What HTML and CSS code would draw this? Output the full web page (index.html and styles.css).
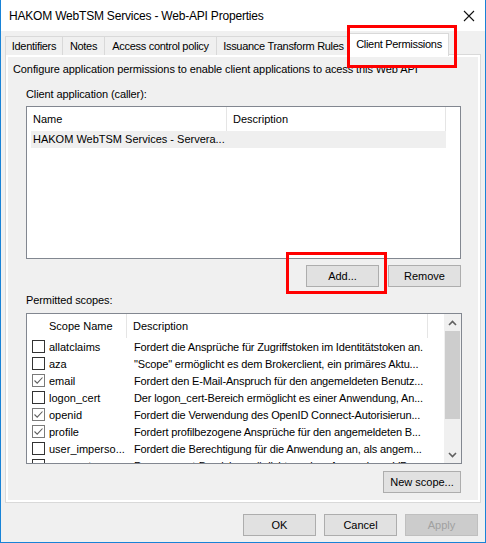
FILE: index.html
```html
<!DOCTYPE html>
<html lang="en">
<head>
  <meta charset="UTF-8">
  <title>HAKOM WebTSM Services - Web-API Properties</title>
  <link rel="stylesheet" href="styles.css">
</head>
<body>

  <div class="window">
    <div class="titlebar">
      <span class="title">HAKOM WebTSM Services - Web-API Properties</span>
      <svg class="close" width="12" height="12" viewBox="0 0 12 12">
        <path d="M1 1L11 11M11 1L1 11" stroke="#111" stroke-width="1.1" fill="none"/>
      </svg>
    </div>

    <div class="body">
      <div class="tabs">
        <div class="tab w-ident">Identifiers</div>
        <div class="tab w-notes">Notes</div>
        <div class="tab w-access">Access control policy</div>
        <div class="tab w-issue">Issuance Transform Rules</div>
        <div class="tab selected">Client Permissions</div>
      </div>

      <div class="panel">
        <div class="page">
          <div class="intro">Configure application permissions to enable client applications to acess this Web API</div>

          <div class="label">Client application (caller):</div>
          <div class="listview clients">
            <div class="header">
              <div class="col c-name">Name</div>
              <div class="col c-desc">Description</div>
            </div>
            <div class="row picked">
              <div class="col c-name">HAKOM WebTSM Services - Servera...</div>
            </div>
          </div>

          <div class="btn-row">
            <button class="btn">Add...</button>
            <button class="btn">Remove</button>
          </div>

          <div class="label second">Permitted scopes:</div>
          <div class="listview scopes">
            <div class="scroll-area">
              <div class="header">
                <div class="col s-name">Scope Name</div>
                <div class="col s-desc">Description</div>
              </div>
              <div class="srow"><span class="check"></span><span class="s-name">allatclaims</span><span class="s-desc">Fordert die Ansprüche für Zugriffstoken im Identitätstoken an.</span></div>
              <div class="srow"><span class="check"></span><span class="s-name">aza</span><span class="s-desc">"Scope" ermöglicht es dem Brokerclient, ein primäres Aktu...</span></div>
              <div class="srow"><span class="check on"><svg width="11" height="11" viewBox="0 0 11 11"><path d="M1.5 5.5L4.2 8.2L9.5 2.5" stroke="#5f5f5f" stroke-width="1.1" fill="none"/></svg></span><span class="s-name">email</span><span class="s-desc">Fordert den E-Mail-Anspruch für den angemeldeten Benutz...</span></div>
              <div class="srow"><span class="check"></span><span class="s-name">logon_cert</span><span class="s-desc">Der logon_cert-Bereich ermöglicht es einer Anwendung, An...</span></div>
              <div class="srow"><span class="check on"><svg width="11" height="11" viewBox="0 0 11 11"><path d="M1.5 5.5L4.2 8.2L9.5 2.5" stroke="#5f5f5f" stroke-width="1.1" fill="none"/></svg></span><span class="s-name">openid</span><span class="s-desc">Fordert die Verwendung des OpenID Connect-Autorisierun...</span></div>
              <div class="srow"><span class="check on"><svg width="11" height="11" viewBox="0 0 11 11"><path d="M1.5 5.5L4.2 8.2L9.5 2.5" stroke="#5f5f5f" stroke-width="1.1" fill="none"/></svg></span><span class="s-name">profile</span><span class="s-desc">Fordert profilbezogene Ansprüche für den angemeldeten B...</span></div>
              <div class="srow"><span class="check"></span><span class="s-name">user_imperso...</span><span class="s-desc">Fordert die Berechtigung für die Anwendung an, als angem...</span></div>
              <div class="srow"><span class="check"></span><span class="s-name">vpn_cert</span><span class="s-desc">Der vpn_cert-Bereich ermöglicht es einer Anwendung, VP...</span></div>
            </div>
            <div class="scrollbar">
              <div class="arrow">
                <svg width="9" height="6" viewBox="0 0 9 6"><path d="M1 5L4.5 1.5L8 5" stroke="#606060" stroke-width="1.6" fill="none"/></svg>
              </div>
              <div class="track"><div class="thumb"></div></div>
              <div class="arrow">
                <svg width="9" height="6" viewBox="0 0 9 6"><path d="M1 1L4.5 4.5L8 1" stroke="#606060" stroke-width="1.6" fill="none"/></svg>
              </div>
            </div>
          </div>

          <div class="btn-row new">
            <button class="btn wide">New scope...</button>
          </div>
        </div>
      </div>

      <div class="dialog-buttons">
        <button class="btn">OK</button>
        <button class="btn">Cancel</button>
        <button class="btn disabled">Apply</button>
      </div>
    </div>

    <!-- highlight frames -->
    <div class="mark mark-tab"></div>
    <div class="mark mark-add"></div>
  </div>

</body>
</html>
```

FILE: styles.css
```css
* {
  margin: 0;
  padding: 0;
  box-sizing: border-box;
}

body {
  font-family: "Liberation Sans", Arial, sans-serif;
  font-size: 11px;
  color: #000;
  background: #f0f0f0;
}

.window {
  position: relative;
  width: 486px;
  height: 543px;
  border: 1px solid #1883d7;
  border-top: none;
  background: #f0f0f0;
  display: flex;
  flex-direction: column;
}

.titlebar {
  height: 31px;
  background: #fff;
  display: flex;
  align-items: center;
  justify-content: space-between;
  padding: 0 10px 0 8px;
}

.title {
  font-size: 12px;
  letter-spacing: -0.2px;
}

.body {
  flex: 1;
  padding: 5px 4px 0 4px;
  display: flex;
  flex-direction: column;
}

/* tab strip */
.tabs {
  display: flex;
  height: 18px;
  align-items: flex-end;
  position: relative;
  z-index: 1;
}

.tab {
  height: 19px;
  margin-bottom: -1px;
  border: 1px solid #d9d9d9;
  border-bottom: none;
  margin-right: -1px;
  line-height: 18px;
  text-align: center;
  background: #f0f0f0;
  white-space: nowrap;
  letter-spacing: -0.3px;
}

.w-ident { width: 58px; }
.w-notes { width: 43px; }
.w-access { width: 113px; }
.w-issue { width: 135px; }

.tab.selected {
  width: 100px;
  height: 23px;
  margin-left: -1px;
  margin-bottom: -2px;
  background: #fff;
  line-height: 20px;
}

.panel {
  height: 449px;
  border: 1px solid #d9d9d9;
  padding: 2px;
  background: #fff;
}

.page {
  height: 100%;
  background: #f0f0f0;
  padding: 5px 0 0 0;
}

.intro {
  line-height: 15px;
  padding-left: 5px;
  letter-spacing: -0.1px;
  white-space: nowrap;
}

.label {
  line-height: 15px;
  padding-left: 18px;
  margin-top: 10px;
  letter-spacing: -0.1px;
}

.label.second {
  margin-top: 6px;
}

.listview {
  margin: 4px 0 0 18px;
  border: 1px solid #828790;
  background: #fff;
  overflow: hidden;
}

.clients {
  width: 435px;
  height: 153px;
  padding-left: 4px;
}

.header {
  display: flex;
  height: 24px;
  align-items: stretch;
}

.header .col {
  flex: none;
  line-height: 24px;
  border-right: 1px solid #e5e5e5;
}

.clients .c-name {
  width: 196px;
  padding-left: 2px;
}

.clients .c-desc {
  width: 219px;
  padding-left: 6px;
}

.row {
  display: flex;
  height: 17px;
  line-height: 17px;
  width: 415px;
}

.row.picked {
  background: #efefef;
}

.btn-row {
  display: flex;
  justify-content: flex-end;
  gap: 9px;
  margin-top: 6px;
  padding-right: 17px;
}

.btn {
  font-family: inherit;
  font-size: 11px;
  width: 73px;
  height: 22px;
  background: #e1e1e1;
  border: 1px solid #adadad;
  color: #000;
}

.btn.wide {
  width: 78px;
}

.btn.disabled {
  background: #cccccc;
  border-color: #bfbfbf;
  color: #a0a0a0;
}

.btn-row.new {
  margin-top: 7px;
}

.scopes {
  margin-top: 5px;
  width: 436px;
  height: 151px;
  display: flex;
}

.scroll-area {
  flex: 1;
  min-width: 0;
  overflow: hidden;
  padding-left: 5px;
}

.scopes .header .s-name {
  width: 95px;
  padding-left: 17px;
}

.scopes .header .s-desc {
  width: 301px;
  padding-left: 6px;
}

.srow {
  display: flex;
  align-items: center;
  height: 17px;
  white-space: nowrap;
}

.check {
  flex: none;
  width: 13px;
  height: 13px;
  border: 1px solid #333;
  background: #fff;
  display: flex;
  align-items: center;
  justify-content: center;
}

.check.on {
  border-color: #7a7a7a;
}

.srow .s-name {
  flex: none;
  width: 83px;
  padding-left: 4px;
  overflow: hidden;
}

.srow .s-desc {
  flex: none;
  width: 312px;
  padding-left: 6px;
  letter-spacing: -0.15px;
  overflow: hidden;
}

.scrollbar {
  flex: none;
  width: 17px;
  display: flex;
  flex-direction: column;
  background: #f0f0f0;
}

.arrow {
  height: 17px;
  display: flex;
  align-items: center;
  justify-content: center;
}

.track {
  flex: 1;
}

.thumb {
  height: 88px;
  margin: 0 1px;
  background: #cdcdcd;
}

.dialog-buttons {
  display: flex;
  justify-content: flex-end;
  gap: 8px;
  margin-top: 11px;
  padding-right: 3px;
}

/* red highlight frames drawn over the dialog */
.mark {
  position: absolute;
  border: 3px solid #ff0000;
  z-index: 5;
}

.mark-tab {
  left: 346px;
  top: 25px;
  width: 110px;
  height: 43px;
}

.mark-add {
  left: 285px;
  top: 252px;
  width: 101px;
  height: 42px;
}
```
